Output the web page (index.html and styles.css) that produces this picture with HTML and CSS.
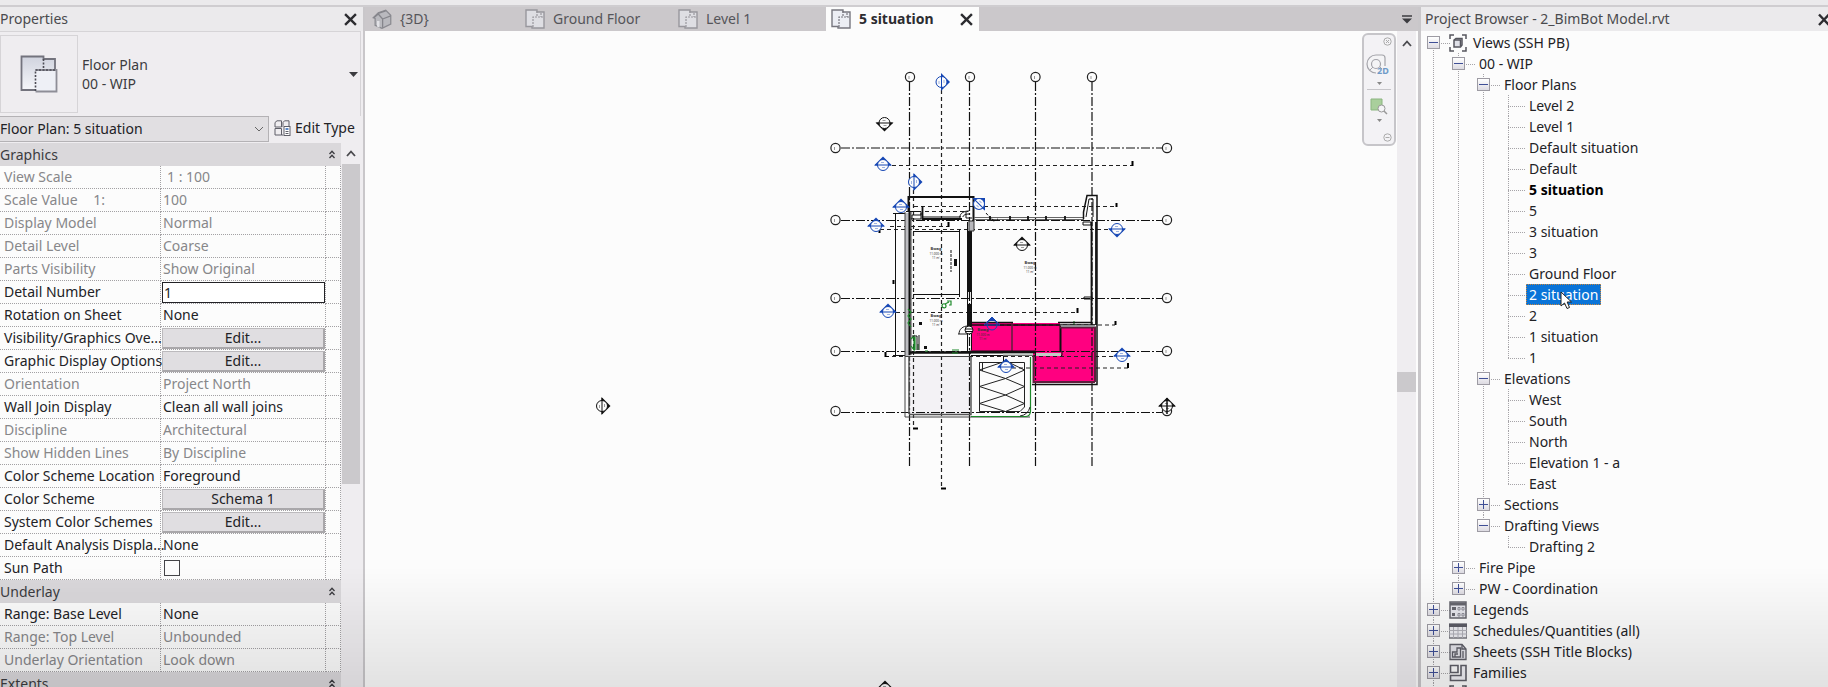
FILE: index.html
```html
<!DOCTYPE html>
<html lang="en">
<head>
    <meta charset="UTF-8">
    <meta name="viewport" content="width=device-width, initial-scale=1.0">
    <title>2_BimBot Model.rvt - Floor Plan: 5 situation</title>
    <link rel="stylesheet" href="styles.css">
</head>
<body>
    <!-- shared symbols -->
    <svg class="defs" aria-hidden="true">
        <defs>
            <symbol id="icon-close" viewBox="0 0 12 12">
                <path d="M1 1L11 11M11 1L1 11" fill="none" stroke="currentColor" stroke-width="2.2"/>
            </symbol>
            <symbol id="icon-plan" viewBox="0 0 20 20">
                <path d="M1 1H12V3H19V19H7V17.500H1Z" fill="#eceef4" stroke="#77777f" stroke-width="1.400"/>
                <path d="M8 18V8H19M12 2V8M16 4V8" fill="none" stroke="#77777f" stroke-width="1.200" stroke-dasharray="2 1"/>
            </symbol>
            <symbol id="icon-up" viewBox="0 0 10 7">
                <path d="M1 6L5 1.5L9 6" fill="none" stroke="currentColor" stroke-width="1.8"/>
            </symbol>
            <symbol id="icon-collapse" viewBox="0 0 6 9">
                <path d="M.5 4L3 1.2L5.500 4M.5 8L3 5.200L5.500 8" fill="none" stroke="currentColor" stroke-width="1.3"/>
            </symbol>
        </defs>
    </svg>

    <div class="ribbon-edge"></div>
    <div class="workspace">

        <aside class="properties">
            <header class="panel-title">
                <h2>Properties</h2>
                <button class="close-button" aria-label="Close properties"><svg width="13" height="13"><use href="#icon-close"/></svg></button>
            </header>

            <div class="type-selector">
                <div class="type-preview">
                    <svg width="38" height="38" viewBox="0 0 38 38">
                        <defs>
                            <linearGradient id="sheet" x1="0" y1="0" x2="0" y2="1">
                                <stop offset="0" stop-color="#d0d3de"/>
                                <stop offset="1" stop-color="#f7f8fb"/>
                            </linearGradient>
                        </defs>
                        <path d="M1.500 1.500H23.500V4H35V15H37V36.500H15.500V35H1.500Z" fill="url(#sheet)"/>
                        <path d="M15.500 35H1.500V1.500H23.500V4H35V15" fill="none" stroke="#73737d" stroke-width="1.800"/>
                        <path d="M15.500 15H36.500V36.500H15.500" fill="#eef0f6" stroke="#8e8e97" stroke-width="1.800"/>
                        <path d="M15.500 36V15H36M23.500 4V15" fill="none" stroke="#4c4c55" stroke-width="1.600" stroke-dasharray="2 1.500"/>
                    </svg>
                </div>
                <p class="type-name">Floor Plan<br>00 - WIP</p>
                <button class="type-arrow" aria-label="Change type"><svg width="9" height="5" viewBox="0 0 9 5"><path d="M0 0H9L4.500 5Z" fill="#3c3c40"/></svg></button>
            </div>

            <div class="instance-row">
                <select class="instance-select" aria-label="View">
                    <option>Floor Plan: 5 situation</option>
                </select>
                <button class="edit-type">
                    <svg width="17" height="16" viewBox="0 0 17 16" fill="none" stroke="#5f5f68">
                        <path d="M1 2.500L3 .8H7.500V7H1ZM9 2.500L10.500 .8H15V6M1 8.500H7.500V15H1ZM7.500 7L9 5.500V2.500M7.500 15H9"/>
                        <rect x="10" y="6.500" width="6" height="9" fill="#fff"/>
                        <path d="M11.500 9H14.500" stroke="#2a62b4" stroke-width="1.500"/>
                        <path d="M11.500 11.500H14.500M11.500 13.500H14.500"/>
                    </svg>
                    Edit Type
                </button>
            </div>

            <div class="property-area">
                <table class="property-table">
                    <colgroup><col class="col-name"><col><col class="col-link"></colgroup>
                    <tbody>
                        <tr class="group"><th colspan="3"><div>Graphics <button aria-label="Collapse Graphics"><svg width="6" height="9"><use href="#icon-collapse"/></svg></button></div></th></tr>
                        <tr class="locked"><th>View Scale</th><td class="indent">1 : 100</td><td></td></tr>
                        <tr class="locked"><th>Scale Value <span class="ratio">1:</span></th><td>100</td><td></td></tr>
                        <tr class="locked"><th>Display Model</th><td>Normal</td><td></td></tr>
                        <tr class="locked"><th>Detail Level</th><td>Coarse</td><td></td></tr>
                        <tr class="locked"><th>Parts Visibility</th><td>Show Original</td><td></td></tr>
                        <tr><th><label for="detail-number">Detail Number</label></th><td class="control"><input type="text" id="detail-number" value="1"></td><td></td></tr>
                        <tr><th>Rotation on Sheet</th><td>None</td><td></td></tr>
                        <tr><th>Visibility/Graphics Ove...</th><td class="control"><button>Edit...</button></td><td></td></tr>
                        <tr><th>Graphic Display Options</th><td class="control"><button>Edit...</button></td><td></td></tr>
                        <tr class="locked"><th>Orientation</th><td>Project North</td><td></td></tr>
                        <tr><th>Wall Join Display</th><td>Clean all wall joins</td><td></td></tr>
                        <tr class="locked"><th>Discipline</th><td>Architectural</td><td></td></tr>
                        <tr class="locked"><th>Show Hidden Lines</th><td>By Discipline</td><td></td></tr>
                        <tr><th>Color Scheme Location</th><td>Foreground</td><td></td></tr>
                        <tr><th>Color Scheme</th><td class="control"><button>Schema 1</button></td><td></td></tr>
                        <tr><th>System Color Schemes</th><td class="control"><button>Edit...</button></td><td></td></tr>
                        <tr><th>Default Analysis Displa...</th><td>None</td><td></td></tr>
                        <tr><th><label for="sun-path">Sun Path</label></th><td><input type="checkbox" id="sun-path"></td><td></td></tr>
                        <tr class="group"><th colspan="3"><div>Underlay <button aria-label="Collapse Underlay"><svg width="6" height="9"><use href="#icon-collapse"/></svg></button></div></th></tr>
                        <tr><th>Range: Base Level</th><td>None</td><td></td></tr>
                        <tr class="locked"><th>Range: Top Level</th><td>Unbounded</td><td></td></tr>
                        <tr class="locked"><th>Underlay Orientation</th><td>Look down</td><td></td></tr>
                        <tr class="group"><th colspan="3"><div>Extents <button aria-label="Collapse Extents"><svg width="6" height="9"><use href="#icon-collapse"/></svg></button></div></th></tr>
                    </tbody>
                </table>
                <div class="scrollbar">
                    <svg width="10" height="7"><use href="#icon-up"/></svg>
                    <div class="thumb"></div>
                </div>
            </div>
        </aside>

        <main class="editor">
            <nav class="tabs">
                <a class="tab" href="#">
                    <svg width="20" height="20" viewBox="0 0 16 16"><path d="M1 7L5 3L11 1L15 5V12L8 15.500L2.500 13V7.500Z" fill="#b9b9be" stroke="#8b8b91"/><path d="M1.500 7L5 4L8.500 8V15M5 3.500L11 1.500M8.500 8L15 5.500" fill="none" stroke="#85858b"/><path d="M4 14V9.500H6V15" fill="#e2e2e6"/></svg>
                    {3D}
                </a>
                <a class="tab" href="#"><svg class="dim" width="20" height="20"><use href="#icon-plan"/></svg>Ground Floor</a>
                <a class="tab" href="#"><svg class="dim" width="20" height="20"><use href="#icon-plan"/></svg>Level 1</a>
                <a class="tab active" href="#"><svg width="20" height="20"><use href="#icon-plan"/></svg>5 situation <svg class="tab-close" width="13" height="13"><use href="#icon-close"/></svg></a>
                <button class="tab-menu" aria-label="All tabs"><svg width="10" height="9" viewBox="0 0 10 9"><path d="M0 1H10" stroke="#3c3c40" stroke-width="1.500"/><path d="M0 3.500H10L5 8.500Z" fill="#3c3c40"/></svg></button>
            </nav>

            <div class="view">
                <div class="viewport">
                    <svg class="drawing" viewBox="365 31 1032 656">
                        <defs>
                            <g id="marker">
                                <path d="M-9 .5L0-8.500L9 .5Z" fill="currentColor"/>
                                <circle r="5.500" fill="#fcfcfc" stroke="currentColor"/>
                                <path d="M-8 0H8" stroke="currentColor"/>
                                <path d="M-2-2.500H1M-1 2.500H2" stroke="currentColor" opacity=".4"/>
                            </g>
                            <g id="bubble">
                                <circle r="4.600" fill="#fcfcfc" stroke="#222" stroke-width="1.200"/>
                                <path d="M-1-1V2" stroke="#999"/>
                            </g>
                        </defs>

                        <!-- terrace, shaft and colour scheme fills -->
                        <path d="M909 356H970V414H909Z" fill="#f3f2f5"/>
                        <path d="M971 323H1060V327H1095V383H1033V352H971Z" fill="#ff0080"/>

                        <!-- grids -->
                        <g stroke="#111" stroke-width="1.200" stroke-dasharray="9 2 2 2" fill="none">
                            <path d="M909.500 82V468M969.500 82V468M1035.500 82V468M1092 82V468"/>
                            <path d="M841 148H1162M841 220.500H1162M841 298.500H1162M841 351.500H1162M841 412.500H1162"/>
                        </g>
                        <use href="#bubble" x="910" y="77"/><use href="#bubble" x="970" y="77"/>
                        <use href="#bubble" x="1035.500" y="77"/><use href="#bubble" x="1092" y="77"/>
                        <use href="#bubble" x="835.500" y="148"/><use href="#bubble" x="1167" y="148"/>
                        <use href="#bubble" x="835.500" y="220"/><use href="#bubble" x="1167" y="220"/>
                        <use href="#bubble" x="835.500" y="298"/><use href="#bubble" x="1167" y="298"/>
                        <use href="#bubble" x="835.500" y="351"/><use href="#bubble" x="1167" y="351"/>
                        <use href="#bubble" x="835.500" y="411"/><use href="#bubble" x="1167" y="411"/>

                        <!-- section lines -->
                        <g stroke="#222" stroke-width="1.200" stroke-dasharray="4 3" fill="none">
                            <path d="M941.500 90V488M913.500 190V428"/>
                            <path d="M892 165.500H1132M914 206.500H1116M925 211.500H968M880 229.500H1110M890 226.500H948"/>
                            <path d="M896 312.500H1077M1000 325H1115M885 356.500H1115M1012 368H1128"/>
                        </g>
                        <path d="M1132.500 161V166M1116.500 203V207M948.500 222V227M1077.500 308V313M1115.500 321V325M1128 363V368M885.500 352V357M879.500 228V233M941 488.500H946M913 428.500H918M893.500 280V284" stroke="#000" stroke-width="2" fill="none"/>
                        <path d="M885 356.500H889" stroke="#000"/>

                        <!-- left wing walls -->
                        <path d="M905 213H910V356H905Z" fill="#bdbdc1"/>
                        <g fill="none" stroke="#111">
                            <path d="M895.500 213V356M893 213.500H905M893 355.500H905"/>
                            <path d="M905 212V417H1030M911 212V355M905 356.500H970" stroke="#444"/>
                            <path d="M909.500 212V355" stroke-width="2"/>
                            <path d="M908.500 212V197H973.500V221" stroke-width="2"/>
                            <path d="M922.500 206V219H962" stroke-width="1.800"/>
                            <path d="M923 217H960M906 211.500H921V215H912V219M921 213V219H911"/>
                            <path d="M960 217C960 213 964 211 969 211M963 217C963 215 966 214 969 214M966 211V218H972M960 219V216"/>
                            <path d="M913 231.500H959.500V294.500H913M959.500 229V297"/>
                            <path d="M951 250V272" stroke-dasharray="3 1"/>
                            <path d="M955.500 259V266" stroke-width="3"/>
                            <path d="M967.500 222V352M971.500 222V350"/>
                            <path d="M969.500 231V292M969.500 304V330" stroke-width="3"/>
                            <path d="M909 352.500H971" stroke-width="2.500"/>
                            <path d="M909 414.500H971V357M909 357V414" stroke="#555" stroke-width="1.500"/>
                        </g>
                        <path d="M969 221H974V231H969Z" fill="#b8b8bc" stroke="#333"/>
                        <path d="M919 322H922V325H919ZM924 346H927V349H924Z" fill="#111"/>

                        <!-- planting and sanitary fittings -->
                        <g fill="none" stroke="#1d8a2a" stroke-width="1.200">
                            <path d="M908 309L911 312L908 316L911 319L908 323L911 327"/>
                            <path d="M942 306C942 303 946 303 946 306S942 308 942 306M945 304L949 302M947 301H951V305H949"/>
                            <path d="M911 339L914 336V350L911 346M915 337V350M918 344V350M925 351H928M952 350H959M952 353H958"/>
                            <path d="M971 416.500H1026Q1030.500 416 1030.500 411V357"/>
                            <path d="M1074 321V325"/>
                        </g>
                        <path d="M912 336H917V350M919 335V350" stroke="#111" fill="none"/>
                        <path d="M958 334H968M959 334C959 329 963 326 968 326V334" fill="none" stroke="#222"/>
                        <circle cx="969" cy="330" r="4" fill="#fcfcfc" stroke="#111"/>
                        <path d="M965 329H973M966 331.500H972" stroke="#111"/>

                        <!-- right wing walls -->
                        <g fill="none" stroke="#111">
                            <path d="M974 217.500H1084M974 219.500H1084" stroke="#666"/>
                            <path d="M990 216V221M1010 216V221M1028 216V221M1046 216V221M1065 216V221" stroke-width="1.800"/>
                            <path d="M986 213L993 221L998 219M992 219L996 222" stroke-dasharray="3 2"/>
                            <path d="M1083.500 219V212L1087 195.500H1097V384.500H1032" stroke-width="1.500"/>
                            <path d="M1086 217L1089 199H1093V217M1083 222H1091V225H1083Z"/>
                            <path d="M1091.500 222V325M1096 222V325" stroke-width="1.800"/>
                            <path d="M1084 297H1092V299H1084Z"/>
                            <path d="M971 322.500H1013M1058 322.500H1092M971 325H1095" stroke-width="1.500"/>
                            <path d="M1012 323V351" stroke="#5e1f3d" stroke-width="1.500"/>
                            <path d="M1060.500 326V352" stroke-width="2"/>
                            <path d="M969 352H1036" stroke-width="3"/>
                            <path d="M971 355.500H1062V351M1003.500 354V365"/>
                            <path d="M1060 327.500H1095V382" stroke="#5e1f3d" stroke-width="2"/>
                            <path d="M1033.500 355V382H1095" stroke="#5e1f3d" stroke-width="2"/>
                        </g>
                        <path d="M1003 353.500H1033V355.500H1003ZM1036 353H1061V356H1036Z" fill="#c4cac6"/>
                        <path d="M1061 325H1095V327H1061Z" fill="#8e8e92"/>

                        <!-- stair -->
                        <path d="M980 362.500H1024.500V407L1020 411.500H979.500V362M982.500 363V371M979.500 370L1005.500 378.500L1024.500 370M979.500 386.500L1005.500 378.500L1024.500 386.500M979.500 386.500L1005.500 395L1024.500 386.500M979.500 403.500L1005.500 395L1024.500 403.500M979.500 403.500L1005.500 411.500L1024.500 403.500M979.500 370L1003 362M1008 362L1024.500 370M1020 416Q1028 415 1030 407" fill="none" stroke="#222"/>

                        <!-- room tags -->
                        <g class="room-tag">
                            <text x="936" y="250">Bwag</text><text class="area" x="936" y="255">11.000 m</text><text class="area" x="936" y="259">11 m²</text>
                            <text x="936" y="317">Bwag</text><text class="area" x="936" y="322">11.000 m</text><text class="area" x="936" y="326">11 m²</text>
                            <text x="1030" y="264">Bwag</text><text class="area" x="1030" y="269">11.000 m</text><text class="area" x="1030" y="273">11 m²</text>
                            <text x="983" y="331">Bwag</text><text class="area" x="983" y="336">11.000 m</text><text class="area" x="983" y="340">11 m²</text>
                        </g>

                        <!-- section and elevation markers -->
                        <g color="#1546b4">
                            <use href="#marker" transform="translate(941.5 82) rotate(90)"/>
                            <use href="#marker" transform="translate(883 165)"/>
                            <use href="#marker" transform="translate(914 182) rotate(90)"/>
                            <use href="#marker" transform="translate(901 207)"/>
                            <use href="#marker" transform="translate(876 226)"/>
                            <use href="#marker" transform="translate(979 204) rotate(45)"/>
                            <use href="#marker" transform="translate(1117 229) rotate(180)"/>
                            <use href="#marker" transform="translate(888 312)"/>
                            <use href="#marker" transform="translate(1006 367)"/>
                            <use href="#marker" transform="translate(1122 356)"/>
                            <path d="M988 321L992 317L996 321Z" fill="currentColor"/>
                            <path d="M984 325H1000L992 317Z" fill="none" stroke="currentColor"/>
                            <circle cx="992" cy="325" r="5" fill="none" stroke="currentColor"/>
                        </g>
                        <g color="#111">
                            <use href="#marker" transform="translate(884.5 123) rotate(180)"/>
                            <use href="#marker" transform="translate(1022 245)"/>
                            <use href="#marker" transform="translate(602 406) rotate(90)"/>
                            <use href="#marker" transform="translate(1167 406)"/>
                            <use href="#marker" transform="translate(885 689)"/>
                            <path d="M1167 398V414" stroke="currentColor" stroke-width="1.500"/>
                        </g>
                    </svg>

                    <div class="nav-bar">
                        <button class="nav-dot" aria-label="Close navigation bar"><svg width="9" height="9" viewBox="0 0 9 9"><circle cx="4.500" cy="4.500" r="3.700" fill="none" stroke="#aaa"/><path d="M3 3L6 6M6 3L3 6" stroke="#aaa"/></svg></button>
                        <button class="nav-tool" aria-label="Steering wheel 2D">
                            <svg width="26" height="24" viewBox="0 0 26 24"><path d="M10 19A9 9 0 1 1 10 1H16Q19 1 19 4V12" fill="#f4f4f6" stroke="#a4a4aa" stroke-width="1.200"/><circle cx="10" cy="10" r="4.500" fill="none" stroke="#a4a4aa" stroke-width="1.200"/><path d="M4 16L7 13M14 13L16 15" stroke="#a4a4aa"/><text x="11" y="20" class="nav-label">2D</text></svg>
                            <svg width="5" height="4" viewBox="0 0 5 4"><path d="M0 0H5L2.500 3Z" fill="#888"/></svg>
                        </button>
                        <hr>
                        <button class="nav-tool" aria-label="Zoom region">
                            <svg width="18" height="17" viewBox="0 0 18 17"><path d="M1 1H12V12H1Z" fill="#a9cf9c" stroke="#8bb580"/><circle cx="11.500" cy="10.500" r="3.500" fill="#f4f4f6" stroke="#999"/><path d="M14 13L17 16" stroke="#999" stroke-width="1.500"/></svg>
                            <svg width="5" height="4" viewBox="0 0 5 4"><path d="M0 0H5L2.500 3Z" fill="#888"/></svg>
                        </button>
                        <button class="nav-dot" aria-label="Navigation bar options"><svg width="9" height="9" viewBox="0 0 9 9"><circle cx="4.500" cy="4.500" r="3.700" fill="none" stroke="#aaa"/><path d="M2.500 4.500H6.500" stroke="#aaa"/></svg></button>
                    </div>
                </div>
                <div class="scrollbar view-scrollbar">
                    <svg width="10" height="7"><use href="#icon-up"/></svg>
                    <div class="thumb"></div>
                </div>
            </div>
        </main>

        <aside class="browser">
            <header class="panel-title">
                <h2>Project Browser - 2_BimBot Model.rvt</h2>
                <button class="close-button" aria-label="Close project browser"><svg width="10" height="13" viewBox="0 0 10 13"><path d="M1 1.500L11 12M11 1.500L1 12" stroke="currentColor" stroke-width="2.400"/></svg></button>
            </header>
            <ul class="tree">
                <li>
                    <div class="node"><button class="toggle" aria-label="Collapse"></button>
                        <svg width="18" height="18" viewBox="0 0 18 18" fill="none" stroke="#55555d" stroke-width="1.500"><path d="M1 5V1H5M13 1H17V5M17 13V17H13M5 17H1V13"/><path d="M5 6L7 4.500H13V11L11.500 13H5Z" fill="#e0e1e8"/><path d="M11.500 12V6H5"/></svg>
                        <span>Views (SSH PB)</span></div>
                    <ul>
                        <li>
                            <div class="node"><button class="toggle" aria-label="Collapse"></button><span>00 - WIP</span></div>
                            <ul>
                                <li>
                                    <div class="node"><button class="toggle" aria-label="Collapse"></button><span>Floor Plans</span></div>
                                    <ul>
                                        <li><a class="leaf" href="#">Level 2</a></li>
                                        <li><a class="leaf" href="#">Level 1</a></li>
                                        <li><a class="leaf" href="#">Default situation</a></li>
                                        <li><a class="leaf" href="#">Default</a></li>
                                        <li><a class="leaf current" href="#">5 situation</a></li>
                                        <li><a class="leaf" href="#">5</a></li>
                                        <li><a class="leaf" href="#">3 situation</a></li>
                                        <li><a class="leaf" href="#">3</a></li>
                                        <li><a class="leaf" href="#">Ground Floor</a></li>
                                        <li><a class="leaf selected" href="#">2 situation<svg class="cursor" width="13" height="19" viewBox="0 0 13 19"><path d="M1 1V15L4.500 12L7 17.500L9.500 16.500L7.200 11H11.500Z" fill="#fff" stroke="#222"/></svg></a></li>
                                        <li><a class="leaf" href="#">2</a></li>
                                        <li><a class="leaf" href="#">1 situation</a></li>
                                        <li><a class="leaf" href="#">1</a></li>
                                    </ul>
                                </li>
                                <li>
                                    <div class="node"><button class="toggle" aria-label="Collapse"></button><span>Elevations</span></div>
                                    <ul>
                                        <li><a class="leaf" href="#">West</a></li>
                                        <li><a class="leaf" href="#">South</a></li>
                                        <li><a class="leaf" href="#">North</a></li>
                                        <li><a class="leaf" href="#">Elevation 1 - a</a></li>
                                        <li><a class="leaf" href="#">East</a></li>
                                    </ul>
                                </li>
                                <li><div class="node"><button class="toggle plus" aria-label="Expand"></button><span>Sections</span></div></li>
                                <li>
                                    <div class="node"><button class="toggle" aria-label="Collapse"></button><span>Drafting Views</span></div>
                                    <ul>
                                        <li><a class="leaf" href="#">Drafting 2</a></li>
                                    </ul>
                                </li>
                            </ul>
                        </li>
                        <li><div class="node"><button class="toggle plus" aria-label="Expand"></button><span>Fire Pipe</span></div></li>
                        <li><div class="node"><button class="toggle plus" aria-label="Expand"></button><span>PW - Coordination</span></div></li>
                    </ul>
                </li>
                <li>
                    <div class="node"><button class="toggle plus" aria-label="Expand"></button>
                        <svg width="18" height="18" viewBox="0 0 18 18"><path d="M1 1H17V17H1Z" fill="#e6e6ec" stroke="#66666e" stroke-width="1.500"/><path d="M1 3H17" stroke="#66666e" stroke-width="3"/><path d="M3 6H7V9H3ZM3 12H6V15H3Z" fill="#66666e"/><path d="M9 6.500H11V9H9ZM13 6.500H15V9H13ZM9 12.500H11V15H9ZM13 12.500H15V15H13Z" fill="none" stroke="#8d8d96"/></svg>
                        <span>Legends</span></div>
                </li>
                <li>
                    <div class="node"><button class="toggle plus" aria-label="Expand"></button>
                        <svg width="18" height="18" viewBox="0 0 18 18"><path d="M0 2H18V16H0Z" fill="#ececf1" stroke="#77777f" stroke-width="1.500"/><path d="M0 3.500H18" stroke="#5c5c66" stroke-width="3"/><path d="M4.500 5V16M9 5V16M13.500 5V16M0 8.500H18M0 12H18" stroke="#b0b0b8"/></svg>
                        <span>Schedules/Quantities (all)</span></div>
                </li>
                <li>
                    <div class="node"><button class="toggle plus" aria-label="Expand"></button>
                        <svg width="18" height="18" viewBox="0 0 18 18" fill="none" stroke="#5f5f68" stroke-width="1.300"><path d="M1 1.500H13L17 6V16.500H1Z" fill="#e4e4ea"/><path d="M13 1.500V6H17M3.500 14V9H8V5H11.500V14ZM6 14V11H9M14 8V15"/></svg>
                        <span>Sheets (SSH Title Blocks)</span></div>
                </li>
                <li>
                    <div class="node"><button class="toggle plus" aria-label="Expand"></button>
                        <svg width="18" height="18" viewBox="0 0 18 18" fill="none" stroke="#5f5f68" stroke-width="1.600"><path d="M1.500 1.500H9V8.500H1.500Z"/><path d="M12 1.500H17V16.500H1.500V11.500H12Z" fill="#f0f0f4"/></svg>
                        <span>Families</span></div>
                </li>
                <li>
                    <div class="node"><button class="toggle plus" aria-label="Expand"></button>
                        <svg width="18" height="18" viewBox="0 0 18 18" fill="none" stroke="#55555d" stroke-width="1.500"><path d="M5 1H1V17H5M13 1H17V17H13"/></svg>
                    </div>
                </li>
            </ul>
        </aside>
    </div>
    <div class="fade"></div>
</body>
</html>
```
FILE: styles.css
```css
* {
    box-sizing: border-box;
}
body {
    display: flex;
    flex-direction: column;
    height: 100vh;
    margin: 0;
    overflow: hidden;
    font-family: "Noto Sans", "Open Sans", sans-serif;
    font-size: 14px;
    line-height: 20px;
    color: #222226;
    background-color: #ebeaec;
}
button, input, select {
    font: inherit;
    color: inherit;
}
button {
    padding: 0;
    border: none;
    background: none;
}
a {
    color: inherit;
    text-decoration: none;
}
svg {
    display: block;
    flex: none;
}
.defs {
    position: absolute;
    width: 0;
    height: 0;
}
.ribbon-edge {
    flex: none;
    height: 7px;
    border-bottom: 2px solid #cfcdd0;
}
.workspace {
    display: flex;
    flex: 1;
    min-height: 0;
}

/* Panels */
.panel-title {
    display: flex;
    flex: none;
    justify-content: space-between;
    align-items: center;
    height: 24px;
    color: #4a4a4e;
}
.panel-title h2 {
    margin: 0;
    font-size: 14px;
    font-weight: normal;
}
.close-button {
    color: #2c2c30;
}
.properties {
    display: flex;
    flex-direction: column;
    flex: none;
    width: 365px;
    border-right: 2px solid #c9c7ca;
    background-color: #efedf0;
    overflow: hidden;
}
.properties .panel-title {
    padding-right: 6px;
    background-color: #ebeaec;
}

/* Type selector */
.type-selector {
    display: flex;
    flex: none;
    align-items: center;
    height: 85px;
    margin-right: 2px;
    padding-right: 2px;
    border-top: 1px solid #d6d4d7;
    border-right: 1px solid #d6d4d7;
}
.type-preview {
    display: flex;
    align-items: center;
    justify-content: center;
    width: 78px;
    height: 78px;
    border: 1px solid #d6d4d7;
}
.type-name {
    flex: 1;
    margin: 0 0 0 4px;
    line-height: 19px;
    color: #3c3c40;
}
.instance-row {
    display: flex;
    flex: none;
    gap: 5px;
    height: 27px;
}
.instance-select {
    width: 269px;
    height: 26px;
    padding: 0 24px 0 0;
    border: 1px solid #b4b2b5;
    border-left: none;
    border-radius: 0;
    appearance: none;
    background: #e1dfe2 url("data:image/svg+xml,%3Csvg xmlns='http://www.w3.org/2000/svg' width='10' height='6'%3E%3Cpath d='M1 1L5 5L9 1' fill='none' stroke='%23666'/%3E%3C/svg%3E") no-repeat right 4px center;
}
.edit-type {
    display: flex;
    align-items: center;
    gap: 4px;
    height: 24px;
}

/* Property grid */
.property-area {
    display: flex;
    flex: 1;
    min-height: 0;
    align-items: flex-start;
}
.property-table {
    width: 341px;
    table-layout: fixed;
    border-collapse: separate;
    border-spacing: 0;
    background-color: #fcfcfc;
}
.col-name {
    width: 161px;
}
.col-link {
    width: 15px;
}
.property-table th,
.property-table td {
    height: 23px;
    padding: 0 0 0 2px;
    border-right: 1px dotted #a3a1a4;
    border-bottom: 1px dotted #a3a1a4;
    font-weight: normal;
    text-align: left;
    line-height: 20px;
    white-space: nowrap;
}
.property-table th {
    padding-left: 4px;
}
.locked {
    color: #87878a;
}
.property-table .indent {
    padding-left: 6px;
}
.ratio {
    margin-left: 12px;
}
.property-table .group th {
    padding: 0 6px 0 0;
    border: none;
    background-color: #dad8db;
    color: #3c3c40;
}
.group div {
    display: flex;
    justify-content: space-between;
}
.property-table .control {
    padding: 1px 0 0 1px;
}
.control button,
.control input {
    display: block;
    width: 100%;
    height: 21px;
    line-height: 18px;
}
.control button {
    border: 1px solid #bcbabd;
    border-right: 2px solid #a9a7aa;
    border-bottom: 2px solid #a9a7aa;
    background-color: #e0dee1;
}
.control input {
    padding: 0 0 0 1px;
    border: 1px solid #222226;
    border-radius: 0;
    background-color: #fff;
}
input[type="checkbox"] {
    display: block;
    width: 16px;
    height: 16px;
    margin: 0 0 0 1px;
    border: 1px solid #444448;
    appearance: none;
}
.scrollbar {
    display: flex;
    flex-direction: column;
    align-items: center;
    align-self: stretch;
    width: 18px;
    margin-left: 1px;
    padding-top: 7px;
    color: #4a4a4e;
    background-color: #efedf0;
}
.scrollbar .thumb {
    width: 100%;
    height: 320px;
    margin-top: 7px;
    background-color: #cbc9cc;
}

/* View tabs and canvas */
.editor {
    display: flex;
    flex-direction: column;
    flex: 1;
    min-width: 0;
}
.tabs {
    display: flex;
    flex: none;
    height: 24px;
    padding-left: 2px;
    background-color: #cbc8cb;
}
.tab {
    display: flex;
    flex: none;
    align-items: center;
    gap: 8px;
    width: 153px;
    padding: 0 6px 0 5px;
    color: #55555a;
    white-space: nowrap;
}
.tab.active {
    font-weight: bold;
    color: #2c2c30;
    background-color: #fcfcfc;
}
.tab .dim {
    opacity: 0.6;
}
.tab-close {
    margin-left: auto;
}
.tab-menu {
    margin-left: auto;
    padding-right: 6px;
}
.view {
    display: flex;
    flex: 1;
    min-height: 0;
    background-color: #fcfcfc;
}
.viewport {
    position: relative;
    flex: 1;
    min-width: 0;
}
.drawing {
    width: 100%;
    height: 100%;
}
.room-tag {
    fill: #333;
    font-size: 4px;
    font-weight: bold;
    text-anchor: middle;
}
.room-tag .area {
    font-size: 3px;
    font-weight: normal;
}
.nav-bar {
    position: absolute;
    top: 2px;
    right: 1px;
    display: flex;
    flex-direction: column;
    align-items: center;
    width: 34px;
    height: 113px;
    padding: 2px;
    border: 2px solid #c6c5c9;
    border-radius: 6px;
    background-color: #f3f2f5;
}
.nav-dot {
    align-self: flex-end;
}
.nav-tool {
    display: flex;
    flex-direction: column;
    align-items: center;
    gap: 4px;
    margin-top: 8px;
}
.nav-bar hr {
    width: 24px;
    margin: 3px 0 0;
    border: none;
    border-top: 1px solid #c6c5c9;
}
.nav-bar .nav-dot:last-child {
    margin-top: auto;
}
.nav-label {
    fill: #6f9ac8;
    font-size: 9px;
    line-height: 10px;
    font-weight: bold;
}
.view-scrollbar {
    width: 19px;
    margin: 0 2px 0 0;
    padding-top: 9px;
}
.view-scrollbar .thumb {
    height: 20px;
    margin-top: 325px;
}

/* Project browser */
.browser {
    flex: none;
    width: 410px;
    border-left: 3px solid #c9c7ca;
    background-color: #fcfcfc;
    overflow: hidden;
}
.browser .panel-title {
    padding-left: 4px;
    background-color: #ebeaec;
}
.tree,
.tree ul {
    margin: 0;
    padding: 0;
    list-style: none;
}
.tree {
    padding: 1px 0 0 6px;
}
.tree ul {
    margin-left: 25px;
}
/* dotted guides: one down the list, one across to the label */
.tree li {
    background-image:
        repeating-linear-gradient(#a6a4a8 0 1px, transparent 1px 2px),
        repeating-linear-gradient(to right, #a6a4a8 0 1px, transparent 1px 2px);
    background-position: 6px 0, 6px 11px;
    background-size: 1px 100%, 17px 1px;
    background-repeat: no-repeat;
}
.tree ul > li:last-child {
    background-size: 1px 12px, 17px 1px;
}
.tree > li:first-child {
    background-position: 6px 12px, 6px 11px;
}
.node {
    display: flex;
    align-items: center;
    height: 21px;
    white-space: nowrap;
}
.toggle {
    width: 13px;
    height: 13px;
    border: 1px solid #9d9ba3;
    background: linear-gradient(#3f4f96, #3f4f96) center / 9px 1px no-repeat, linear-gradient(#fff, #dddbe2);
}
.toggle.plus {
    background: linear-gradient(#3f4f96, #3f4f96) center / 9px 1px no-repeat, linear-gradient(#3f4f96, #3f4f96) center / 1px 9px no-repeat, linear-gradient(#fff, #dddbe2);
}
.node span {
    margin-left: 14px;
}
.node svg {
    margin-left: 9px;
}
.node svg + span {
    margin-left: 6px;
}
.leaf {
    position: relative;
    display: block;
    width: fit-content;
    height: 21px;
    margin-left: 24px;
    padding: 0 3px;
    line-height: 21px;
    white-space: nowrap;
}
.leaf.current {
    font-weight: bold;
    color: #000;
}
.leaf.selected {
    color: #fff;
    background-color: #0a74d8;
    outline: 1px dotted #c9873f;
    outline-offset: -1px;
}
.cursor {
    position: absolute;
    top: 7px;
    left: 34px;
}

/* shade along the bottom of the window */
.fade {
    position: fixed;
    right: 0;
    bottom: 0;
    left: 0;
    height: 120px;
    background: linear-gradient(transparent, rgba(0, 0, 0, 0.1));
    pointer-events: none;
}
```
